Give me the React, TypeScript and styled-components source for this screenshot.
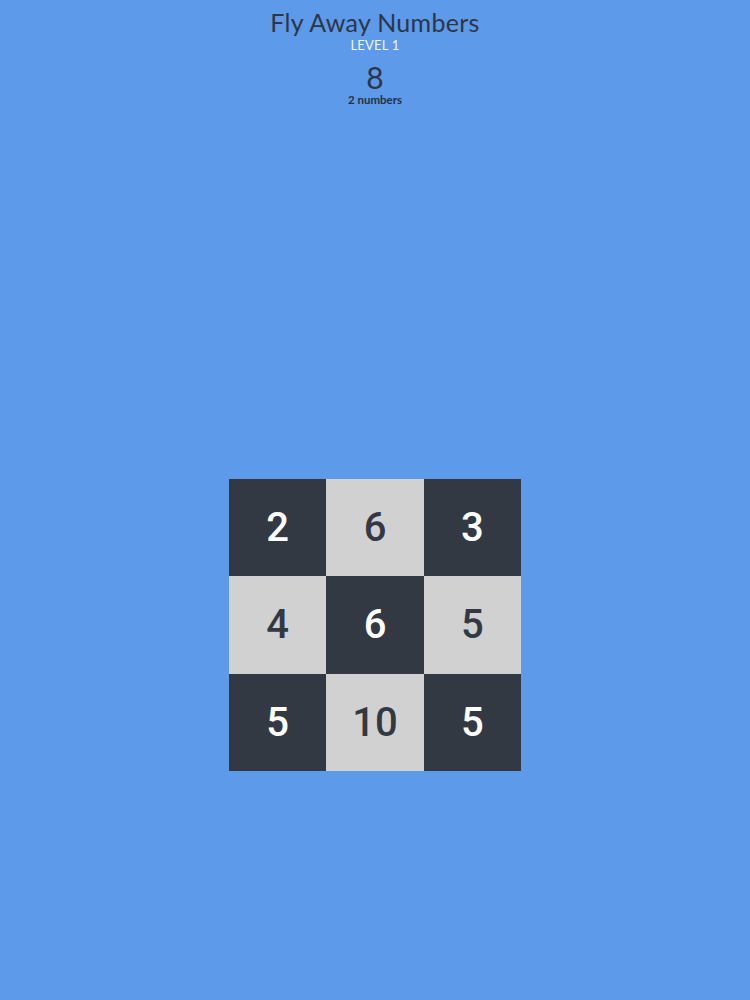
import React from 'react';
import styled, { createGlobalStyle } from 'styled-components';

const GlobalStyle = createGlobalStyle`
  html, body {
    margin: 0;
    padding: 0;
    background: #5d9aea;
  }
`;

const Page = styled.div`
  width: 750px;
  height: 1000px;
  background: #5d9aea;
  display: flex;
  flex-direction: column;
  align-items: center;
  font-family: Lato, "Liberation Sans", sans-serif;
  color: #2c3646;
`;

const Header = styled.header`
  display: flex;
  flex-direction: column;
  align-items: center;
  padding-top: 7px;
`;

const Title = styled.h1`
  margin: 0;
  font-size: 25px;
  font-weight: 400;
  line-height: 30px;
  letter-spacing: 0.3px;
`;

const Level = styled.div`
  font-size: 13px;
  line-height: 16px;
  color: #f2f6fc;
  letter-spacing: 0.2px;
`;

const Target = styled.div`
  margin-top: 9px;
  font-size: 30px;
  line-height: 30px;
`;

const Hint = styled.div`
  margin-top: 2px;
  font-size: 11.5px;
  font-weight: 700;
  line-height: 12px;
  color: #26303e;
`;

const Board = styled.div`
  margin-top: 373px;
  display: grid;
  grid-template-columns: repeat(3, 97.33px);
  grid-auto-rows: 97.33px;
`;

const Cell = styled.div<{ $dark: boolean }>`
  display: flex;
  align-items: center;
  justify-content: center;
  background: ${(p) => (p.$dark ? '#323943' : '#d1d1d2')};
  color: ${(p) => (p.$dark ? '#ffffff' : '#323943')};
  font-family: Roboto, "DejaVu Sans Condensed", sans-serif;
  font-size: 40px;
  font-weight: 500;
`;

const numbers = [2, 6, 3, 4, 6, 5, 5, 10, 5];

const App: React.FC = () => (
  <Page>
    <GlobalStyle />
    <Header>
      <Title>Fly Away Numbers</Title>
      <Level>LEVEL 1</Level>
      <Target>8</Target>
      <Hint>2 numbers</Hint>
    </Header>
    <Board>
      {numbers.map((n, i) => (
        <Cell key={i} $dark={i % 2 === 0}>
          {n}
        </Cell>
      ))}
    </Board>
  </Page>
);

export default App;
